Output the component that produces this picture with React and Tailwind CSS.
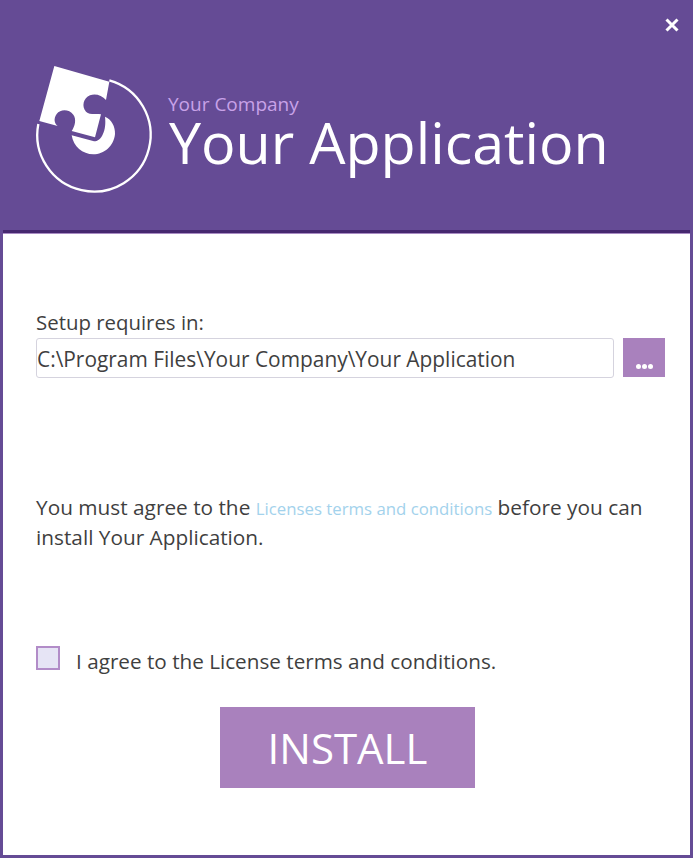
const Logo = () => (
  <svg viewBox="0 0 450 450" className="w-[150px] h-[150px] shrink-0">
    <path
      d="M103 48 L268 95 L258 150 C246 136 226 130 210 136 C190 144 184 170 198 185 C209 196 228 190 243 193 L225 262 L155 243 C165 228 170 208 160 194 C148 178 122 176 110 192 C100 206 103 220 113 228 L58 213 Z"
      fill="#ffffff"
    />
    <path d="M268 91 A170 170 0 1 1 55 222" fill="none" stroke="#ffffff" strokeWidth="7" />
    <path
      d="M255 200 C275 208 286 230 285 252 C282 288 252 313 220 313 C188 313 160 290 155 256 L222 274 C245 274 260 240 255 200 Z"
      fill="#ffffff"
    />
  </svg>
);

export default function App() {
  return (
    <div
      className="w-[693px] h-[858px] bg-[#654b95] flex flex-col overflow-hidden text-[#3f3f3f]"
      style={{ fontFamily: '"Open Sans", "Noto Sans", sans-serif' }}
    >
      <div className="h-[230px] flex items-start relative">
        <div className="absolute top-[17px] right-[13px]">
          <svg viewBox="0 0 16 16" className="w-[16px] h-[16px]">
            <path d="M2.5 2.5 L13.5 13.5 M13.5 2.5 L2.5 13.5" stroke="#ffffff" strokeWidth="3" />
          </svg>
        </div>
        <div className="mt-[50px] ml-[20px]">
          <Logo />
        </div>
        <div className="mt-[92px] -ml-[2px]">
          <div className="text-[19px] leading-[24px] text-[#c8a2e8]">Your Company</div>
          <div className="text-[57.4px] leading-[54px] -mt-[1px] ml-[1px] text-white whitespace-nowrap">Your Application</div>
        </div>
      </div>
      <div className="mx-[3px] mb-[3px] flex-1 flex flex-col border-t-[3px] border-[#46286f] bg-white">
        <div className="border-t border-[#a98bc4]" />
        <div className="flex-1 pl-[33px] pr-[25px]">
          <div className="mt-[75px] text-[20.4px] leading-[27px]">Setup requires in:</div>
          <div className="flex mt-[2px] items-stretch">
            <div className="w-[578px] h-[40px] shrink-0 border border-[#d5d3de] rounded-[3px] flex items-center pt-[3px] text-[20.9px] whitespace-nowrap">
              C:\Program Files\Your Company\Your Application
            </div>
            <div className="w-[42px] h-[39px] ml-[9px] shrink-0 bg-[#a981bd] flex items-end justify-center pb-[8px] gap-[1px]">
              <span className="w-[5px] h-[5px] rounded-full bg-white" />
              <span className="w-[5px] h-[5px] rounded-full bg-white" />
              <span className="w-[5px] h-[5px] rounded-full bg-white" />
            </div>
          </div>
          <div className="mt-[115px] text-[20.8px] leading-[28px] w-[620px]">
            You must agree to the <span className="text-[16.8px] text-[#a3d2ec]">Licenses terms and conditions</span> before you can install Your Application.
          </div>
          <div className="flex items-start mt-[95px]">
            <div className="w-[24px] h-[24px] border-[2px] border-[#b28cc8] bg-[#e6e4f5]" />
            <div className="ml-[16px] mt-[2px] text-[20.7px] leading-[27px]">I agree to the License terms and conditions.</div>
          </div>
          <div className="flex mt-[32px] pl-[184px]">
            <div className="w-[255px] h-[81px] bg-[#a981bd] text-white text-[42px] flex items-center justify-center">
              INSTALL
            </div>
          </div>
        </div>
      </div>
    </div>
  );
}
